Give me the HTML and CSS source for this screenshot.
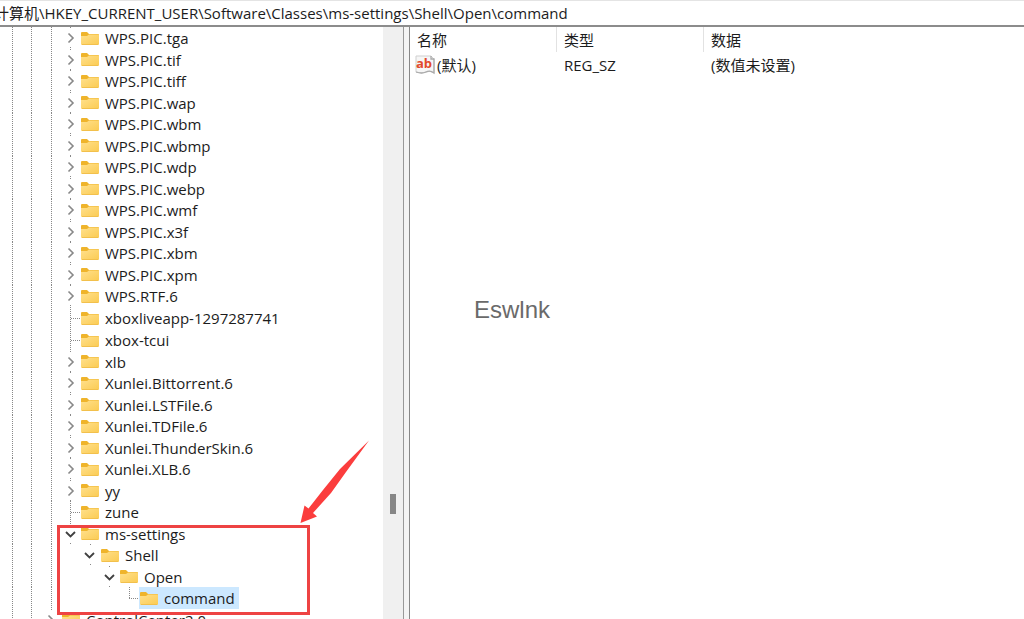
FILE: index.html
```
<!DOCTYPE html>
<html lang="zh-CN">
<head>
    <meta charset="UTF-8">
    <meta name="viewport" content="width=device-width, initial-scale=1.0">
    <title>注册表编辑器</title>
    <link rel="stylesheet" href="styles.css">
</head>
<body>
    <!-- Shared icons -->
    <svg class="icon-defs" aria-hidden="true">
        <defs>
            <linearGradient id="folderFill" x1="0" y1="0" x2="1" y2="1">
                <stop offset="0" stop-color="#ffe08c"/>
                <stop offset="1" stop-color="#fbcb52"/>
            </linearGradient>
        </defs>
        <symbol id="folder" viewBox="0 0 18 15">
            <path d="M0 2Q0 1 1 1H6L8 3H17Q18 3 18 4V8H0Z" fill="#efb42b"/>
            <path d="M0 5H6L8 3.5H17Q18 3.5 18 4.5V13Q18 14 17 14H1Q0 14 0 13Z" fill="url(#folderFill)"/>
            <path d="M1 13.5H17" stroke="#f2c04c"/>
        </symbol>
        <symbol id="chevron" viewBox="0 0 12 12">
            <path d="M3.5 1.5L8 6L3.5 10.5" fill="none" stroke="#888" stroke-width="1.6"/>
        </symbol>
        <symbol id="chevron-open" viewBox="0 0 12 12">
            <path d="M1 4L5.5 8.5L10 4" fill="none" stroke="#404040" stroke-width="1.8"/>
        </symbol>
    </svg>

    <!-- Address bar -->
    <div class="address-bar">
        <input class="address" type="text" aria-label="地址" spellcheck="false" value="计算机\HKEY_CURRENT_USER\Software\Classes\ms-settings\Shell\Open\command">
    </div>

    <main class="panes">
        <div class="tree-pane">
            <div class="tree" id="tree" role="tree" aria-label="注册表项"></div>
            <div class="scrollbar"><div class="thumb"></div></div>
        </div>
        <div class="splitter"></div>
        <div class="values-pane">
            <table class="values">
                <thead>
                    <tr><th class="name">名称</th><th class="type">类型</th><th>数据</th></tr>
                </thead>
                <tbody>
                    <tr>
                        <td>
                            <div class="value-name">
                                <svg class="value-icon" viewBox="0 0 20 20" aria-hidden="true">
                                    <path d="M1 1H16L19 4V18Q15 15 11 17T1 17Z" fill="#f6f6f6" stroke="#cfcfcf"/>
                                    <path d="M16 1V4H19V18Q15 15 11 17T1 17" fill="none" stroke="#aaa" stroke-width="1.3"/>
                                    <text class="value-icon-text" x="9" y="13" text-anchor="middle">ab</text>
                                </svg>
                                <span>(默认)</span>
                            </div>
                        </td>
                        <td>REG_SZ</td>
                        <td>(数值未设置)</td>
                    </tr>
                </tbody>
            </table>
        </div>
    </main>

    <!-- Marks on top of the window -->
    <div class="watermark">Eswlnk</div>
    <div class="highlight-box"></div>
    <svg class="arrow" viewBox="0 0 70 84" aria-hidden="true">
        <path d="M0.5 83L4.5 65.5L8.5 68.5L23 50L40 29L69 0.5L46 32L31 53L13 73L17 76.5Z" fill="#fb3d3d"/>
    </svg>

    <script>
        // [name, depth, state]
        const keys = [
            ['WPS.PIC.tga', 3, 'closed'],
            ['WPS.PIC.tif', 3, 'closed'],
            ['WPS.PIC.tiff', 3, 'closed'],
            ['WPS.PIC.wap', 3, 'closed'],
            ['WPS.PIC.wbm', 3, 'closed'],
            ['WPS.PIC.wbmp', 3, 'closed'],
            ['WPS.PIC.wdp', 3, 'closed'],
            ['WPS.PIC.webp', 3, 'closed'],
            ['WPS.PIC.wmf', 3, 'closed'],
            ['WPS.PIC.x3f', 3, 'closed'],
            ['WPS.PIC.xbm', 3, 'closed'],
            ['WPS.PIC.xpm', 3, 'closed'],
            ['WPS.RTF.6', 3, 'closed'],
            ['xboxliveapp-1297287741', 3, 'leaf'],
            ['xbox-tcui', 3, 'leaf'],
            ['xlb', 3, 'closed'],
            ['Xunlei.Bittorrent.6', 3, 'closed'],
            ['Xunlei.LSTFile.6', 3, 'closed'],
            ['Xunlei.TDFile.6', 3, 'closed'],
            ['Xunlei.ThunderSkin.6', 3, 'closed'],
            ['Xunlei.XLB.6', 3, 'closed'],
            ['yy', 3, 'closed'],
            ['zune', 3, 'leaf'],
            ['ms-settings', 3, 'open'],
            ['Shell', 4, 'open'],
            ['Open', 5, 'open'],
            ['command', 6, 'leaf last selected'],
            ['ControlCenter2.0', 2, 'closed']
        ];

        const icon = (id, cls) => `<svg class="${cls}" aria-hidden="true"><use href="#${id}"/></svg>`;

        document.getElementById('tree').innerHTML = keys.map(([name, depth, state]) => {
            let cells = '';
            for (let i = 0; i < depth; i++) {
                cells += `<span class="cell${i < 3 ? ' guide' : ''}"></span>`;
            }
            if (state.includes('leaf')) {
                cells += '<span class="cell guide branch"></span>';
            } else {
                const id = state === 'open' ? 'chevron-open' : 'chevron';
                cells += `<span class="cell guide"><button class="toggle" aria-label="${name}">${icon(id, 'chevron')}</button></span>`;
            }
            return `<div class="row ${state}" role="treeitem" aria-level="${depth + 1}">${cells}<span class="label">${icon('folder', 'folder')}${name}</span></div>`;
        }).join('');
    </script>
</body>
</html>
```
FILE: styles.css
```
* {
    box-sizing: border-box;
}
body {
    margin: 0;
    height: 100vh;
    display: flex;
    flex-direction: column;
    overflow: hidden;
    position: relative;
    background-color: #fff;
    color: #1c1c1c;
    font-family: "Open Sans", "Noto Sans CJK SC", sans-serif;
    font-size: 15px;
}
.icon-defs {
    position: absolute;
    width: 0;
    height: 0;
}
/* Address bar */
.address-bar {
    flex: none;
    height: 27px;
    border-top: 1px solid #e4e4e4;
    border-bottom: 2px solid #8c8c8c;
}
.address {
    display: block;
    width: 100%;
    height: 22px;
    margin-left: -6px;
    padding: 0;
    border: none;
    outline: none;
    background: transparent;
    color: inherit;
    font: inherit;
}
.panes {
    flex: 1;
    min-height: 0;
    display: flex;
}
/* Key tree */
.tree-pane {
    flex: none;
    width: 403px;
    display: flex;
    overflow: hidden;
}
.tree {
    flex: 1;
    padding-left: 2px;
}
.row {
    display: flex;
    height: 22px;
    line-height: 20px;
    white-space: nowrap;
}
.row:nth-child(even) {
    height: 21px;
}
.row.leaf {
    height: 22px;
}
.cell {
    flex: none;
    width: 20px;
    display: flex;
    align-items: center;
    justify-content: center;
}
.cell:nth-child(even) {
    width: 19px;
}
/* Dotted line down the middle of the cell */
.guide {
    background: repeating-linear-gradient(#888 0 1px, transparent 1px 2px) center / 1px 100% no-repeat;
}
.branch {
    background:
        repeating-linear-gradient(#888 0 1px, transparent 1px 2px) center / 1px 100% no-repeat,
        repeating-linear-gradient(90deg, #888 0 1px, transparent 1px 2px) right center / 50% 1px no-repeat;
}
.last .branch {
    background:
        repeating-linear-gradient(#888 0 1px, transparent 1px 2px) center top / 1px 50% no-repeat,
        repeating-linear-gradient(90deg, #888 0 1px, transparent 1px 2px) right center / 50% 1px no-repeat;
}
.toggle {
    width: 14px;
    height: 18px;
    padding: 0;
    border: none;
    background-color: #fff;
    display: flex;
    align-items: center;
    justify-content: center;
}
.chevron {
    flex: none;
    width: 12px;
    height: 12px;
}
.label {
    display: flex;
    align-items: center;
    gap: 6px;
    padding: 0 4px 0 1px;
}
.selected .label {
    background-color: #cce8ff;
}
.folder {
    width: 18px;
    height: 15px;
}
/* Scrollbar */
.scrollbar {
    flex: none;
    width: 20px;
    background-color: #f0f0f0;
    display: flex;
    justify-content: center;
    padding-top: 467px;
}
.thumb {
    width: 6px;
    height: 20px;
    background-color: #868686;
}
.splitter {
    flex: none;
    width: 7px;
    background-color: #f4f4f4;
    border-left: 1px solid #999;
    border-right: 1px solid #888;
}
/* Value list */
.values-pane {
    flex: 1;
    min-width: 0;
}
.values {
    width: 100%;
    table-layout: fixed;
    border-collapse: separate;
    border-spacing: 0;
    line-height: 24px;
    white-space: nowrap;
}
.values th,
.values td {
    height: 25px;
    padding: 0 0 0 7px;
    font-weight: normal;
    text-align: left;
}
.values .name,
.values .type {
    width: 147px;
    border-right: 1px solid #e2e2e2;
}
.values td:first-child {
    padding-left: 5px;
}
.value-name {
    display: flex;
    align-items: center;
    gap: 2px;
}
.value-icon {
    width: 20px;
    height: 20px;
    overflow: visible;
}
.value-icon-text {
    fill: #e2492b;
    font-family: "Open Sans", sans-serif;
    font-size: 13px;
    font-weight: bold;
}
/* Marks */
.watermark {
    position: absolute;
    left: 474px;
    top: 296px;
    color: #6a6a6a;
    font-family: "Liberation Sans", Arial, sans-serif;
    font-size: 24px;
    line-height: 28px;
}
.highlight-box {
    position: absolute;
    left: 57px;
    top: 525px;
    width: 253px;
    height: 90px;
    border: 3px solid #ee4343;
}
.arrow {
    position: absolute;
    left: 300px;
    top: 440px;
    width: 70px;
    height: 84px;
}
```
